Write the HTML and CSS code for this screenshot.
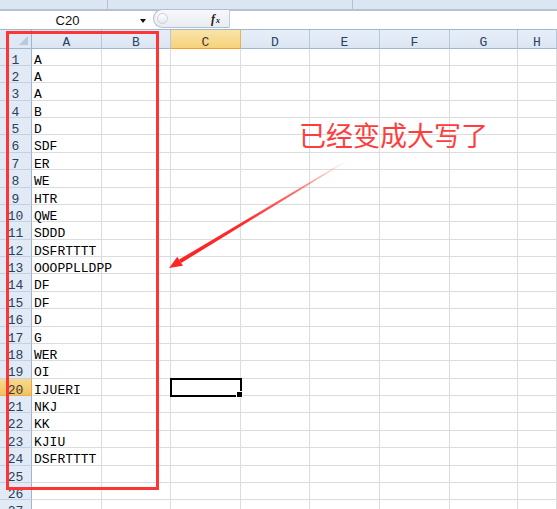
FILE: index.html
```html
<!DOCTYPE html>
<html>
<head>
<meta charset="utf-8">
<link rel="stylesheet" href="styles.css">
</head>
<body>
<div class="page">
  <div class="ribbon"><div class="rb rb1"></div><div class="rb rb2"></div><div class="rb rb3"></div></div>
  <div class="fbar">
    <div class="namebox">C20</div>
    <div class="nbarrow"><span class="tri"></span></div>
    <div class="pill"><span class="knob"></span><span class="fx">f<small>x</small></span></div>
    <div class="finput"></div>
  </div>
  <div class="sheet">
    <div class="corner"><span class="ctri"></span></div><div class="ch">A</div><div class="ch">B</div><div class="ch sel">C</div><div class="ch">D</div><div class="ch">E</div><div class="ch">F</div><div class="ch">G</div><div class="ch">H</div>
    <div class="rh">1</div><div class="c">A</div><div class="c"></div><div class="c"></div><div class="c"></div><div class="c"></div><div class="c"></div><div class="c"></div><div class="c"></div>
    <div class="rh">2</div><div class="c">A</div><div class="c"></div><div class="c"></div><div class="c"></div><div class="c"></div><div class="c"></div><div class="c"></div><div class="c"></div>
    <div class="rh">3</div><div class="c">A</div><div class="c"></div><div class="c"></div><div class="c"></div><div class="c"></div><div class="c"></div><div class="c"></div><div class="c"></div>
    <div class="rh">4</div><div class="c">B</div><div class="c"></div><div class="c"></div><div class="c"></div><div class="c"></div><div class="c"></div><div class="c"></div><div class="c"></div>
    <div class="rh">5</div><div class="c">D</div><div class="c"></div><div class="c"></div><div class="c"></div><div class="c"></div><div class="c"></div><div class="c"></div><div class="c"></div>
    <div class="rh">6</div><div class="c">SDF</div><div class="c"></div><div class="c"></div><div class="c"></div><div class="c"></div><div class="c"></div><div class="c"></div><div class="c"></div>
    <div class="rh">7</div><div class="c">ER</div><div class="c"></div><div class="c"></div><div class="c"></div><div class="c"></div><div class="c"></div><div class="c"></div><div class="c"></div>
    <div class="rh">8</div><div class="c">WE</div><div class="c"></div><div class="c"></div><div class="c"></div><div class="c"></div><div class="c"></div><div class="c"></div><div class="c"></div>
    <div class="rh">9</div><div class="c">HTR</div><div class="c"></div><div class="c"></div><div class="c"></div><div class="c"></div><div class="c"></div><div class="c"></div><div class="c"></div>
    <div class="rh">10</div><div class="c">QWE</div><div class="c"></div><div class="c"></div><div class="c"></div><div class="c"></div><div class="c"></div><div class="c"></div><div class="c"></div>
    <div class="rh">11</div><div class="c">SDDD</div><div class="c"></div><div class="c"></div><div class="c"></div><div class="c"></div><div class="c"></div><div class="c"></div><div class="c"></div>
    <div class="rh">12</div><div class="c">DSFRTTTT</div><div class="c"></div><div class="c"></div><div class="c"></div><div class="c"></div><div class="c"></div><div class="c"></div><div class="c"></div>
    <div class="rh">13</div><div class="c">OOOPPLLDPP</div><div class="c"></div><div class="c"></div><div class="c"></div><div class="c"></div><div class="c"></div><div class="c"></div><div class="c"></div>
    <div class="rh">14</div><div class="c">DF</div><div class="c"></div><div class="c"></div><div class="c"></div><div class="c"></div><div class="c"></div><div class="c"></div><div class="c"></div>
    <div class="rh">15</div><div class="c">DF</div><div class="c"></div><div class="c"></div><div class="c"></div><div class="c"></div><div class="c"></div><div class="c"></div><div class="c"></div>
    <div class="rh">16</div><div class="c">D</div><div class="c"></div><div class="c"></div><div class="c"></div><div class="c"></div><div class="c"></div><div class="c"></div><div class="c"></div>
    <div class="rh">17</div><div class="c">G</div><div class="c"></div><div class="c"></div><div class="c"></div><div class="c"></div><div class="c"></div><div class="c"></div><div class="c"></div>
    <div class="rh">18</div><div class="c">WER</div><div class="c"></div><div class="c"></div><div class="c"></div><div class="c"></div><div class="c"></div><div class="c"></div><div class="c"></div>
    <div class="rh">19</div><div class="c">OI</div><div class="c"></div><div class="c"></div><div class="c"></div><div class="c"></div><div class="c"></div><div class="c"></div><div class="c"></div>
    <div class="rh sel">20</div><div class="c">IJUERI</div><div class="c"></div><div class="c active"></div><div class="c"></div><div class="c"></div><div class="c"></div><div class="c"></div><div class="c"></div>
    <div class="rh">21</div><div class="c">NKJ</div><div class="c"></div><div class="c"></div><div class="c"></div><div class="c"></div><div class="c"></div><div class="c"></div><div class="c"></div>
    <div class="rh">22</div><div class="c">KK</div><div class="c"></div><div class="c"></div><div class="c"></div><div class="c"></div><div class="c"></div><div class="c"></div><div class="c"></div>
    <div class="rh">23</div><div class="c">KJIU</div><div class="c"></div><div class="c"></div><div class="c"></div><div class="c"></div><div class="c"></div><div class="c"></div><div class="c"></div>
    <div class="rh">24</div><div class="c">DSFRTTTT</div><div class="c"></div><div class="c"></div><div class="c"></div><div class="c"></div><div class="c"></div><div class="c"></div><div class="c"></div>
    <div class="rh">25</div><div class="c"></div><div class="c"></div><div class="c"></div><div class="c"></div><div class="c"></div><div class="c"></div><div class="c"></div><div class="c"></div>
    <div class="rh">26</div><div class="c"></div><div class="c"></div><div class="c"></div><div class="c"></div><div class="c"></div><div class="c"></div><div class="c"></div><div class="c"></div>
    <div class="rh">27</div><div class="c"></div><div class="c"></div><div class="c"></div><div class="c"></div><div class="c"></div><div class="c"></div><div class="c"></div><div class="c"></div>
  </div>

  <div class="redbox"></div>
  <div class="note">已经变成大写了</div>
  <svg class="arrow" width="557" height="509" viewBox="0 0 557 509">
    <defs>
      <linearGradient id="ag" x1="348" y1="160" x2="170" y2="268" gradientUnits="userSpaceOnUse">
        <stop offset="0" stop-color="#ff5a5a" stop-opacity="0"/>
        <stop offset="0.3" stop-color="#ff3a3a" stop-opacity="0.75"/>
        <stop offset="0.6" stop-color="#ff2a2a" stop-opacity="1"/>
        <stop offset="1" stop-color="#ff2020" stop-opacity="1"/>
      </linearGradient>
    </defs>
    <polygon points="348.3,160.4 347.7,159.6 179.1,259.6 181.1,263.0" fill="url(#ag)"/>
    <polygon points="169,268 182.9,265.8 177.3,256.8" fill="#ff2626"/>
  </svg>
</div>
</body>
</html>
```
FILE: styles.css
```css
html, body {
  margin: 0;
  padding: 0;
  background: #ffffff;
}
.page {
  position: relative;
  width: 557px;
  height: 509px;
  overflow: hidden;
  font-family: "Liberation Mono", "DejaVu Sans Mono", monospace;
}
.ribbon {
  display: flex;
  height: 9px;
  background: #dce6f2;
  border-bottom: 2px solid #b4c2d3;
}
.rb {
  height: 100%;
  border-right: 1px solid #b3c1d2;
}
.rb1 { width: 107px; }
.rb2 { width: 244px; }
.rb3 { flex: 1; border-right: none; }

.fbar {
  display: flex;
  height: 18px;
  background: #ffffff;
  border-bottom: 1px solid #9eb6ce;
}
.namebox {
  width: 135px;
  text-align: center;
  font-family: "Liberation Sans", Arial, sans-serif;
  font-size: 13px;
  line-height: 19px;
  color: #111;
}
.nbarrow {
  width: 18px;
  display: flex;
  align-items: center;
  justify-content: center;
}
.tri {
  width: 0;
  height: 0;
  border-left: 3.5px solid transparent;
  border-right: 3.5px solid transparent;
  border-top: 4px solid #111;
  margin-left: -2px;
  margin-top: 1px;
}
.pill {
  position: relative;
  width: 77px;
  height: 19px;
  margin-top: -2px;
  box-sizing: border-box;
  border: 1px solid #b2bfcf;
  border-right: 1px solid #c3ccd8;
  border-radius: 10px 0 0 10px;
  background: linear-gradient(#f7f8fa, #e8ecf1);
  display: flex;
  align-items: center;
  justify-content: flex-end;
}
.knob {
  position: absolute;
  left: 3px;
  top: 3px;
  width: 11px;
  height: 11px;
  border-radius: 50%;
  border: 1px solid #c9d1dc;
  background: linear-gradient(#ffffff, #e4e9ef);
  box-sizing: border-box;
}
.fx {
  font-family: "Liberation Serif", "Times New Roman", serif;
  font-style: italic;
  font-weight: bold;
  font-size: 12px;
  color: #1a1a1a;
  margin-right: 9px;
  margin-top: 1px;
}
.fx small {
  font-size: 8px;
  margin-left: 1px;
}
.finput {
  flex: 1;
}

.sheet {
  display: grid;
  grid-template-columns: 32px 70px 69px 70px 69px 70px 70px 68px 1fr;
  grid-template-rows: 19px repeat(4, 17px 17px 18px 17px 17px 18px 17px 18px);
  font-size: 13px;
  background: #ffffff;
}
.sheet > div {
  box-sizing: border-box;
  white-space: nowrap;
}
.corner {
  position: relative;
  background: #dfe8f4;
  border-right: 1px solid #9eb6ce;
  border-bottom: 1px solid #9eb6ce;
}
.ctri {
  position: absolute;
  right: 3px;
  bottom: 3px;
  width: 0;
  height: 0;
  border-left: 9px solid transparent;
  border-bottom: 9px solid #b9c8da;
}
.ch {
  background: linear-gradient(#e6eef8, #dce6f3);
  border-right: 1px solid #b6c7da;
  border-bottom: 1px solid #9eb6ce;
  text-align: center;
  color: #2b4260;
  line-height: 10px;
  padding-top: 8px;
}
.ch.sel {
  background: linear-gradient(#f9e4a9, #f6d27a);
  border-bottom: 1px solid #f0a030;
  border-right: 1px solid #e6b35a;
  color: #3a3a3a;
}
.rh {
  background: #e2eaf5;
  border-right: 1px solid #9eb6ce;
  border-bottom: 1px solid #c3d1e2;
  text-align: center;
  color: #27415f;
  line-height: 8px;
  padding-top: 8px;
}
.rh.sel {
  background: linear-gradient(#f9d98e, #f3c260);
  border-bottom: 1px solid #e9b04c;
  border-right: 1px solid #eca540;
  color: #3a3a3a;
}
.c {
  position: relative;
  border-right: 1px solid #dadcdd;
  border-bottom: 1px solid #dadcdd;
  padding-left: 2px;
  padding-top: 8px;
  line-height: 8px;
  color: #000;
}
.c.active {
  outline: 2px solid #000;
  outline-offset: -1px;
  z-index: 2;
}
.c.active::after {
  content: "";
  position: absolute;
  right: -3px;
  bottom: -3px;
  width: 5px;
  height: 5px;
  background: #000;
  border: 1px solid #fff;
  box-sizing: content-box;
}

.redbox {
  position: absolute;
  left: 6px;
  top: 31px;
  width: 153px;
  height: 459px;
  box-sizing: border-box;
  border: 3px solid #ff3535;
  z-index: 5;
}
.note {
  position: absolute;
  left: 299px;
  top: 121px;
  font-family: "Noto Sans CJK SC", sans-serif;
  font-size: 27px;
  line-height: 27px;
  color: #ff3d3d;
  letter-spacing: 0;
  z-index: 5;
}
.arrow {
  position: absolute;
  left: 0;
  top: 0;
  z-index: 6;
  pointer-events: none;
}
```
